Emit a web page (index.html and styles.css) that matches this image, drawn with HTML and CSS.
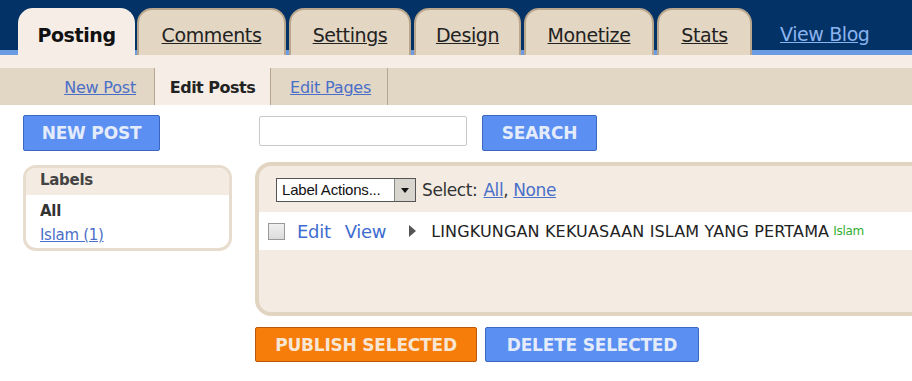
FILE: index.html
```html
<!DOCTYPE html>
<html lang="id">
<head>
    <meta charset="UTF-8">
    <title>Blogger: Edit Posts</title>
    <link rel="stylesheet" href="styles.css">
</head>
<body>
    <div class="top-bar">
        <a class="tab tab-active tab-posting">Posting</a>
        <a class="tab tab-comments" href="#">Comments</a>
        <a class="tab tab-settings" href="#">Settings</a>
        <a class="tab tab-design" href="#">Design</a>
        <a class="tab tab-monetize" href="#">Monetize</a>
        <a class="tab tab-stats" href="#">Stats</a>
        <a class="view-blog" href="#">View Blog</a>
    </div>
    <div class="strip"></div>
    <div class="sub-nav">
        <a class="sub-tab" href="#">New Post</a>
        <span class="sub-tab sub-active">Edit Posts</span>
        <a class="sub-tab" href="#">Edit Pages</a>
    </div>

    <div class="main">
        <div class="side">
            <button class="btn btn-blue btn-new">NEW POST</button>
            <div class="labels-box">
                <div class="labels-head">Labels</div>
                <div class="labels-body">
                    <div class="labels-all">All</div>
                    <a href="#">Islam (1)</a>
                </div>
            </div>
        </div>

        <div class="content">
            <div class="search-row">
                <input type="text" class="search-input">
                <button class="btn btn-blue btn-search">SEARCH</button>
            </div>

            <div class="posts-box">
                <div class="toolbar">
                    <span class="fake-select">
                        <span class="fake-select-text">Label Actions...</span>
                        <span class="fake-select-arrow"></span>
                    </span>
                    <span class="select-label">Select:</span>
                    <a href="#">All</a>,&nbsp;<a href="#">None</a>
                </div>
                <div class="post-row">
                    <span class="check"></span>
                    <a class="row-link" href="#">Edit</a>
                    <a class="row-link" href="#">View</a>
                    <span class="arrow"></span>
                    <span class="post-title">LINGKUNGAN KEKUASAAN ISLAM YANG PERTAMA</span>
                    <span class="post-label">Islam</span>
                </div>
                <div class="posts-empty"></div>
            </div>

            <div class="actions">
                <button class="btn btn-orange btn-publish">PUBLISH SELECTED</button>
                <button class="btn btn-blue btn-delete">DELETE SELECTED</button>
            </div>
        </div>
    </div>
</body>
</html>
```

FILE: styles.css
```css
body {
    margin: 0;
    font-family: "DejaVu Sans", Verdana, sans-serif;
    background: #fff;
    color: #333;
    overflow: hidden;
}
a {
    color: #4a6fc9;
}

/* top tabs */
.top-bar {
    display: flex;
    align-items: flex-end;
    height: 50px;
    padding-left: 18px;
    background: #033266;
    border-bottom: 5px solid #6a9ae2;
}
.tab {
    box-sizing: border-box;
    height: 47px;
    margin-bottom: -5px;
    margin-right: 3px;
    padding-top: 14px;
    text-align: center;
    font-size: 19px;
    letter-spacing: -0.4px;
    color: #222;
    background: #e3d6c3;
    border: 2px solid #b9a68d;
    border-bottom: none;
    border-radius: 15px 15px 0 0;
}
.tab-active {
    background: #f6eee6;
    border-color: #f6eee6;
    font-weight: bold;
    text-decoration: none;
    color: #111;
}
.tab-posting { width: 117px; margin-right: 2px; }
.tab-comments { width: 149px; }
.tab-settings { width: 122px; }
.tab-design { width: 107px; }
.tab-monetize { width: 130px; }
.tab-stats { width: 95px; }
.view-blog {
    margin-left: 25px;
    margin-bottom: 5px;
    font-size: 19px;
    letter-spacing: -0.4px;
    color: #8ab4ef;
}

.strip {
    height: 13px;
    background: #f6eee6;
}

/* sub tabs */
.sub-nav {
    display: flex;
    height: 37px;
    padding-left: 50px;
    background: #e2d6c4;
}
.sub-tab {
    box-sizing: border-box;
    width: 105px;
    padding-top: 10px;
    text-align: center;
    font-size: 16px;
    letter-spacing: -0.2px;
    border-right: 1px solid #b7a68f;
}
.sub-tab:first-child {
    text-align: right;
    padding-right: 18px;
}
.sub-active {
    width: 116px;
    background: #f6eee6;
    font-weight: bold;
    letter-spacing: -0.5px;
    color: #222;
}
.sub-tab:last-child {
    width: 117px;
    text-align: left;
    padding-left: 19px;
}

/* layout */
.main {
    display: flex;
    gap: 23px;
    padding: 10px 0 0 23px;
}
.side {
    width: 209px;
    flex-shrink: 0;
}
.content {
    width: 720px;
    flex-shrink: 0;
}

.btn {
    box-sizing: border-box;
    height: 36px;
    padding: 0;
    font-family: "DejaVu Sans", Verdana, sans-serif;
    font-size: 17px;
    font-weight: bold;
    letter-spacing: -0.2px;
    border-radius: 2px;
    cursor: pointer;
}
.btn-blue {
    background: #5b8ff1;
    border: 1px solid #3b67c2;
    color: #e4ecfb;
}
.btn-orange {
    background: #f77d0b;
    border: 1px solid #b9580a;
    color: #f7e6d3;
}
.btn-new { width: 137px; }
.btn-search { width: 115px; margin-left: 15px; }
.btn-publish { width: 222px; height: 35px; }
.btn-delete { width: 214px; height: 35px; }

.labels-box {
    margin-top: 14px;
    border: 3px solid #e7dccd;
    border-radius: 13px;
    overflow: hidden;
}
.labels-head {
    height: 24px;
    padding: 3px 0 0 14px;
    background: #f4ece2;
    font-size: 15px;
    font-weight: bold;
    letter-spacing: -0.3px;
    color: #444;
}
.labels-body {
    padding: 4px 14px 1px;
    font-size: 15px;
    letter-spacing: -0.3px;
    line-height: 24px;
}
.labels-all {
    font-weight: bold;
    color: #333;
}

/* search */
.search-row {
    display: flex;
    align-items: flex-start;
}
.search-input {
    box-sizing: border-box;
    width: 208px;
    height: 30px;
    margin: 1px 0 0 4px;
    border: 1px solid #c9c9c9;
    border-radius: 2px;
}

/* posts */
.posts-box {
    margin-top: 11px;
    border: 4px solid #e1d4c1;
    border-radius: 16px;
    background: #f4ece3;
}
.toolbar {
    display: flex;
    align-items: center;
    height: 40px;
    padding: 4px 0 0 17px;
    font-size: 17px;
    letter-spacing: -0.4px;
}
.fake-select {
    display: flex;
    box-sizing: border-box;
    width: 140px;
    height: 24px;
    margin-right: 6px;
    background: #fff;
    border: 1px solid #555;
}
.fake-select-text {
    flex: 1;
    padding: 2px 0 0 5px;
    font-family: "Liberation Sans Narrow", "Liberation Sans", Arial, sans-serif;
    font-size: 15px;
    letter-spacing: -0.2px;
    color: #111;
    white-space: nowrap;
    overflow: hidden;
}
.fake-select-arrow {
    position: relative;
    width: 20px;
    background: #d8d5cf;
    border-left: 1px solid #888;
}
.fake-select-arrow::after {
    content: "";
    position: absolute;
    left: 6px;
    top: 9px;
    border: 4px solid transparent;
    border-top: 5px solid #111;
}
.select-label {
    margin-right: 6px;
    color: #333;
}

.post-row {
    display: flex;
    align-items: center;
    height: 38px;
    margin-top: 2px;
    padding-left: 9px;
    background: #fff;
}
.check {
    box-sizing: border-box;
    width: 17px;
    height: 17px;
    margin-right: 12px;
    border: 1px solid #999;
    background: linear-gradient(#f0f0f0, #dcdcdc);
}
.row-link {
    margin-right: 14px;
    font-size: 18px;
    letter-spacing: -0.3px;
    text-decoration: none;
    color: #3e6cd0;
}
.arrow {
    width: 0;
    height: 0;
    margin: 0 15px 0 9px;
    border-top: 6px solid transparent;
    border-bottom: 6px solid transparent;
    border-left: 7px solid #555;
}
.post-title {
    font-size: 16px;
    letter-spacing: 0.15px;
    color: #222;
}
.post-label {
    margin-left: 4px;
    font-size: 12px;
    letter-spacing: -0.3px;
    color: #2fae2f;
}
.posts-empty {
    height: 62px;
}

.actions {
    display: flex;
    gap: 8px;
    margin-top: 11px;
}
```
